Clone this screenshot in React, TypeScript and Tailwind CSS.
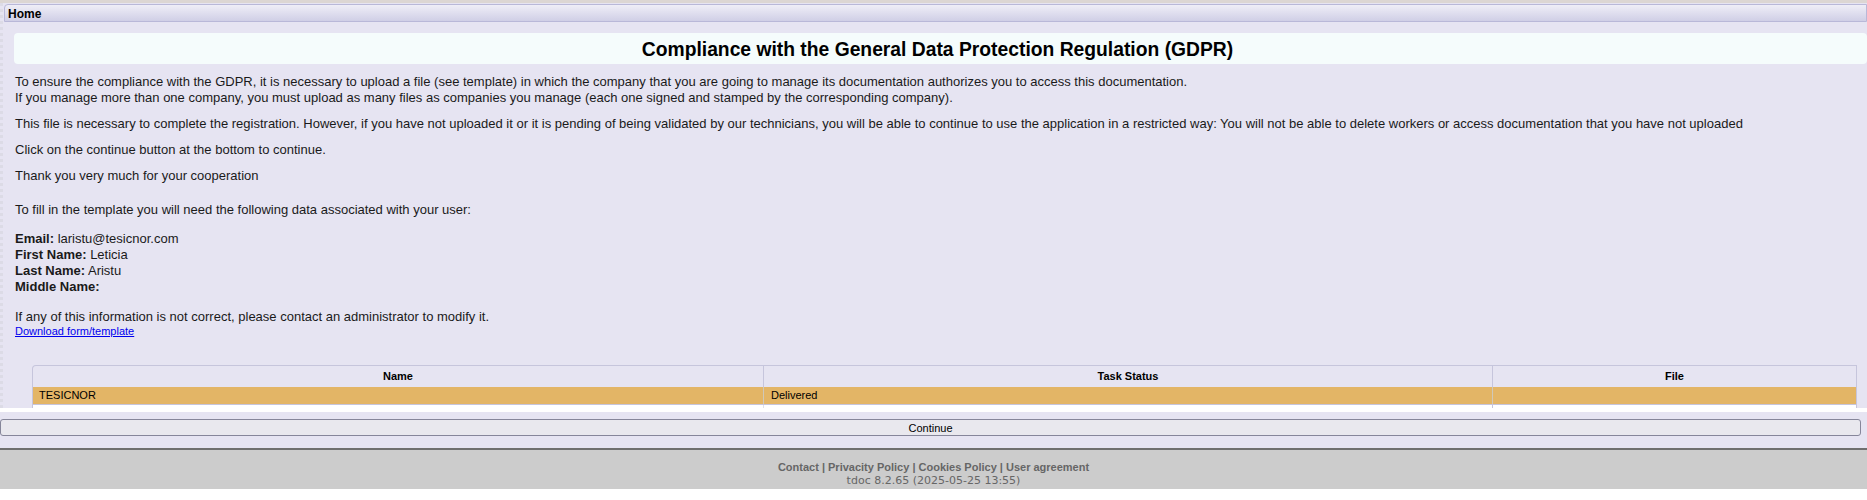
import React from "react";

const font = { fontFamily: '"Liberation Sans", Arial, sans-serif' };

export default function App() {
  return (
    <div className="w-[1867px] h-[500px] bg-white overflow-hidden text-[#1a1a1a]" style={font}>
      <div className="h-[3px] bg-[#dcd6d3]" />
      <div className="h-[405px] bg-[#e6e4f2] border-l-[3px] border-dotted border-[#dcdbe6] overflow-hidden">
        <div className="mt-[1px] ml-[1px] h-[18px] border border-[#b9b8d8] rounded-tl-[4px] bg-gradient-to-b from-[#efeef7] to-[#d0cfe6] flex items-center pl-[3px] pt-[2px]">
          <span className="text-[12px] font-bold text-black">Home</span>
        </div>
        <div className="pl-[11px]">
          <div className="mt-[11px] h-[31px] bg-[#f5fcfc] rounded-[4px] flex items-center justify-center pt-[3px] pr-[6px]">
            <h1 className="text-[19.3px] font-bold text-black">Compliance with the General Data Protection Regulation (GDPR)</h1>
          </div>
          <div className="text-[13px] leading-[16px] pl-[1px]">
            <p className="mt-[10px]">
              To ensure the compliance with the GDPR, it is necessary to upload a file (see template) in which the company that you are going to manage its documentation authorizes you to access this documentation.
              <br />
              If you manage more than one company, you must upload as many files as companies you manage (each one signed and stamped by the corresponding company).
            </p>
            <p className="mt-[10px]">
              This file is necessary to complete the registration. However, if you have not uploaded it or it is pending of being validated by our technicians, you will be able to continue to use the application in a restricted way: You will not be able to delete workers or access documentation that you have not uploaded
            </p>
            <p className="mt-[10px]">Click on the continue button at the bottom to continue.</p>
            <p className="mt-[10px]">Thank you very much for your cooperation</p>
            <p className="mt-[18px]">To fill in the template you will need the following data associated with your user:</p>
            <p className="mt-[13px]">
              <b>Email:</b> laristu@tesicnor.com
              <br />
              <b>First Name:</b> Leticia
              <br />
              <b>Last Name:</b> Aristu
              <br />
              <b>Middle Name:</b>
            </p>
            <p className="mt-[14px]">If any of this information is not correct, please contact an administrator to modify it.</p>
            <a href="#" className="block text-[11px] leading-[13px] text-[#0000ee] underline">Download form/template</a>
          </div>
          <div className="mt-[27px] ml-[18px] w-[1825px] text-[11px]">
            <div className="grid grid-cols-[730px_729px_1fr] border-t border-l border-r border-[#c6c5dc] rounded-tl-[4px] h-[22px] items-center">
              <div className="text-center font-bold text-black">Name</div>
              <div className="text-center font-bold text-black border-l border-[#c6c5dc] h-full flex items-center justify-center">Task Status</div>
              <div className="text-center font-bold text-black border-l border-[#c6c5dc] h-full flex items-center justify-center">File</div>
            </div>
            <div className="grid grid-cols-[730px_729px_1fr] h-[18px] bg-[#e3b566] border-b border-l border-r border-[#c6c5dc] items-center">
              <div className="pl-[6px] text-black">TESICNOR</div>
              <div className="pl-[7px] text-black border-l border-[#d0c8b8] h-full flex items-center">Delivered</div>
              <div className="border-l border-[#d0c8b8] h-full" />
            </div>
            <div className="grid grid-cols-[730px_729px_1fr] h-[20px] bg-white border-l border-r border-[#c6c5dc]">
              <div />
              <div className="border-l border-[#e0e0ea]" />
              <div className="border-l border-[#c6c5dc] pl-[5px] pt-[2px]">
                <a href="#" className="text-[#0000ee] underline">Download form/template</a>
              </div>
            </div>
          </div>
        </div>
      </div>
      <div className="h-[4px] bg-white" />
      <div className="h-[36px] bg-[#e6e4f2] pt-[7px]">
        <button className="w-[1861px] h-[17px] rounded-[3px] border border-[#86869a] bg-[#e9e8ee] text-[11px] text-black flex items-center justify-center pt-[1px]">
          Continue
        </button>
      </div>
      <div className="h-[41px] bg-[#cccccc] border-t-2 border-[#6f6f6f] flex flex-col items-center pt-[11px] text-[#666666]">
        <div className="text-[11px] font-bold leading-[13px]">
          Contact | Privacity Policy | Cookies Policy | User agreement
        </div>
        <div className="text-[11px] leading-[14px]" style={{ fontFamily: '"DejaVu Sans", Verdana, sans-serif' }}>
          tdoc 8.2.65 (2025-05-25 13:55)
        </div>
      </div>
    </div>
  );
}
